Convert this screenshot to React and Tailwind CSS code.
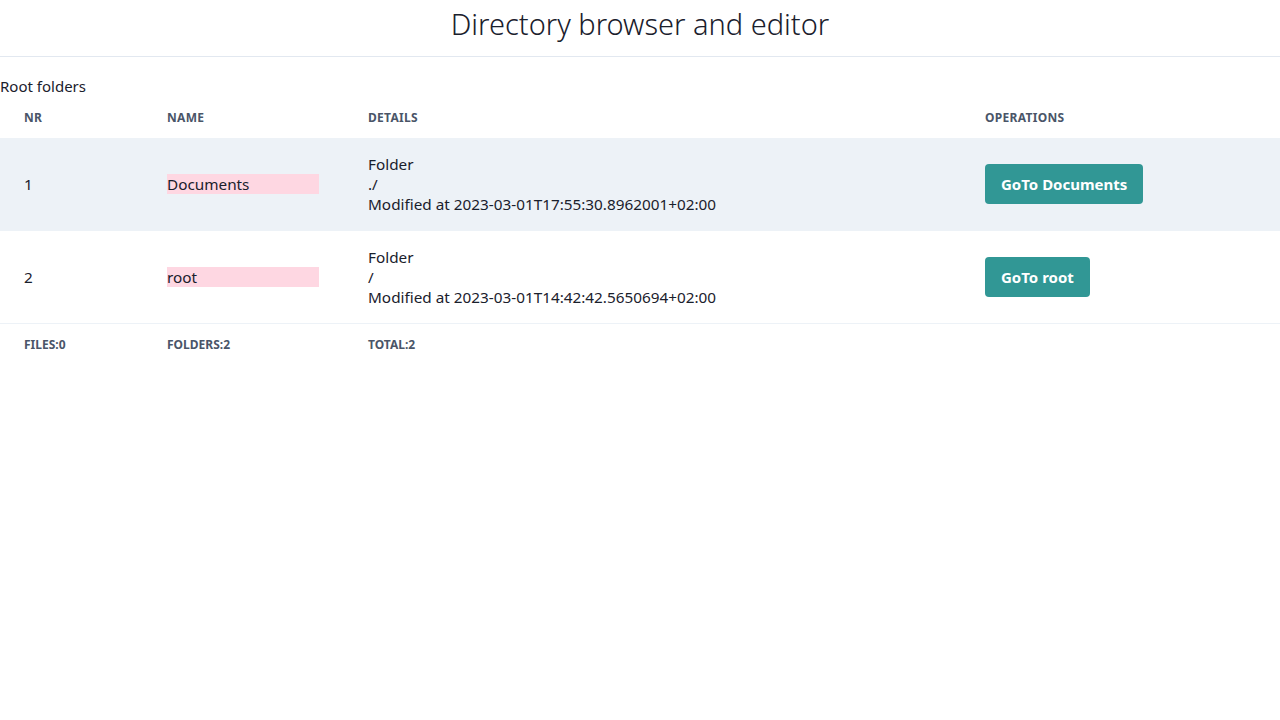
import React from 'react'

const folders = [
  { nr: 1, name: 'Documents', path: './', modified: '2023-03-01T17:55:30.8962001+02:00' },
  { nr: 2, name: 'root', path: '/', modified: '2023-03-01T14:42:42.5650694+02:00' },
]

const App = () => {
  return (
    <div className="min-h-screen bg-white text-[#1a202c]" style={{ fontFamily: '"Noto Sans", "Open Sans", sans-serif' }}>
      {/* Header */}
      <div className="h-[57px] border-b border-[#e2e8f0] flex items-center justify-center pb-2">
        <h1 className="text-[29px] leading-9 font-light">Directory browser and editor</h1>
      </div>

      <div className="pt-[19px]">
        <div className="text-[15px] leading-5">Root folders</div>
        <table className="w-full mt-[2px] border-collapse">
          <thead>
            <tr className="text-left text-[12px] font-bold uppercase tracking-wide text-[#4a5568]">
              <th className="px-6 py-3 w-[143px] leading-4">Nr</th>
              <th className="px-6 py-3 w-[201px] leading-4">Name</th>
              <th className="px-6 py-3 w-[617px] leading-4">Details</th>
              <th className="px-6 py-3 leading-4">Operations</th>
            </tr>
          </thead>
          <tbody>
            {folders.map((f, i) => (
              <tr key={f.nr} className={`border-b border-[#edf2f7] ${i === 0 ? 'bg-[#edf2f7]' : 'bg-white'}`}>
                <td className="px-6 py-4 text-[15.3px]">{f.nr}</td>
                <td className="px-6 py-4 text-[15.3px]">
                  <div className="bg-[#fed7e2] w-[152px] leading-5">{f.name}</div>
                </td>
                <td className="px-6 py-4 text-[15.3px] leading-5">
                  <div>Folder</div>
                  <div>{f.path}</div>
                  <div>Modified at {f.modified}</div>
                </td>
                <td className="px-6 py-4">
                  <button className="bg-[#319795] text-white font-bold text-[15px] leading-5 px-4 py-[10px] rounded">
                    GoTo {f.name}
                  </button>
                </td>
              </tr>
            ))}
          </tbody>
          <tfoot>
            <tr className="text-left text-[12px] font-bold uppercase text-[#4a5568]">
              <td className="px-6 pb-3 leading-4 pt-[13px]">Files:0</td>
              <td className="px-6 pb-3 leading-4 pt-[13px]">Folders:2</td>
              <td className="px-6 pb-3 leading-4 pt-[13px]">Total:2</td>
              <td className="px-6 py-3"></td>
            </tr>
          </tfoot>
        </table>
      </div>
    </div>
  )
}

export default App
